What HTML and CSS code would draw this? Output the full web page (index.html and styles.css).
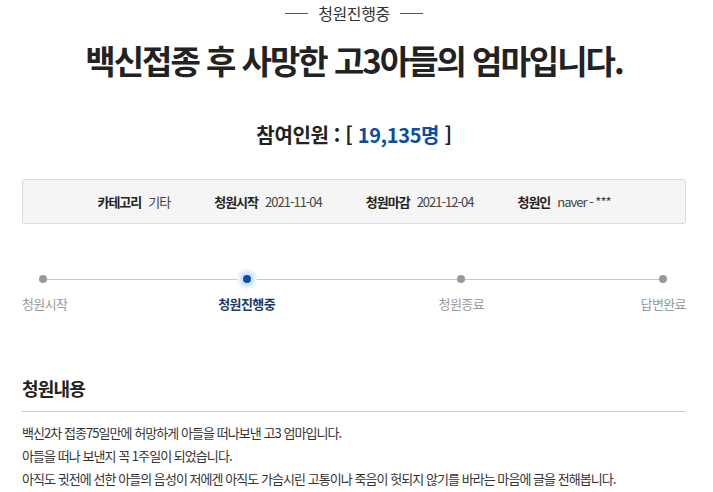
FILE: index.html
```html
<!DOCTYPE html>
<html lang="ko">
<head>
<meta charset="utf-8">
<link rel="stylesheet" href="styles.css">
</head>
<body>
<div class="page">
  <div class="status"><span class="dash"></span><span class="status-text">청원진행중</span><span class="dash"></span></div>
  <h1 class="title">백신접종 후 사망한 고3아들의 엄마입니다.</h1>
  <div class="count">참여인원 : [ <span class="num">19,135명</span> ]</div>
  <div class="info">
    <div class="item"><b>카테고리</b><span>기타</span></div>
    <div class="item"><b>청원시작</b><span>2021-11-04</span></div>
    <div class="item"><b>청원마감</b><span>2021-12-04</span></div>
    <div class="item"><b>청원인</b><span>naver - ***</span></div>
  </div>
  <div class="progress">
    <div class="track"></div>
    <div class="step first"><span class="dot"></span><span class="label">청원시작</span></div>
    <div class="step active"><span class="dot"></span><span class="label">청원진행중</span></div>
    <div class="step third"><span class="dot"></span><span class="label">청원종료</span></div>
    <div class="step last"><span class="dot"></span><span class="label">답변완료</span></div>
  </div>
  <h2 class="sec">청원내용</h2>
  <div class="content">
    <p>백신2차 접종75일만에 허망하게 아들을 떠나보낸 고3 엄마입니다.</p>
    <p>아들을 떠나 보낸지 꼭 1주일이 되었습니다.</p>
    <p>아직도 귓전에 선한 아들의 음성이 저에겐 아직도 가슴시린 고통이나 죽음이 헛되지 않기를 바라는 마음에 글을 전해봅니다.</p>
  </div>
</div>
</body>
</html>
```
FILE: styles.css
```css
* { box-sizing: border-box; }
html, body { margin: 0; padding: 0; background: #fff; }
body { font-family: "Noto Sans CJK KR", "Noto Sans", sans-serif; color: #333; }
.page { width: 664px; margin: 0 0 0 22px; }
.status { display: flex; align-items: center; justify-content: center; gap: 10px; height: 26px; }
.dash { width: 23px; height: 1px; background: #555; }
.status-text { font-size: 16px; color: #333; letter-spacing: -0.4px; line-height: 26px; }
.title { margin: 10px 0 0; text-align: center; font-size: 33px; font-weight: 700; color: #222; letter-spacing: -2px; line-height: 48px; }
.count { margin-top: 37px; text-align: center; font-size: 20px; font-weight: 700; color: #222; letter-spacing: -0.35px; line-height: 28px; }
.count .num { color: #0b4ea2; }
.info { margin-top: 30px; height: 45px; background: #f5f5f5; border: 1px solid #dcdcdc; border-radius: 3px; display: flex; align-items: center; justify-content: center; gap: 44px; font-size: 13px; letter-spacing: -1px; }
.item { display: flex; gap: 7px; }
.item b { font-weight: 700; color: #222; }
.item span { color: #444; }
.progress { position: relative; margin-top: 42px; display: flex; justify-content: space-between; height: 60px; }
.track { position: absolute; left: 21px; right: 23px; top: 13px; height: 1px; background: #c8c8c8; }
.step { position: relative; display: flex; flex-direction: column; align-items: center; width: 50px; }
.step.first { align-items: flex-start; }
.step.first .dot { margin-left: 17px; }
.step.last { align-items: flex-end; }
.step.last .dot { margin-right: 19px; }
.step.active { transform: translateX(-5px); }
.step.third { transform: translateX(5px); }
.dot { width: 8px; height: 8px; border-radius: 50%; background: #999; margin-top: 9px; }
.step.active .dot { background: #0b4ea2; box-shadow: 0 0 0 3px #cfe4fb, 0 0 0 6px #eaf4fe; }
.label { margin-top: 12px; font-size: 13px; color: #999; letter-spacing: -0.6px; line-height: 18px; white-space: nowrap; }
.step.active .label { color: #1b3a6b; font-weight: 700; }
.sec { margin: 49px 0 0; font-size: 18px; font-weight: 700; color: #222; letter-spacing: -0.8px; line-height: 26px; padding-bottom: 10px; border-bottom: 1px solid #ccc; }
.content { padding-top: 9px; }
.content p { margin: 0; font-size: 13px; line-height: 23px; color: #333; letter-spacing: -0.95px; }
```
